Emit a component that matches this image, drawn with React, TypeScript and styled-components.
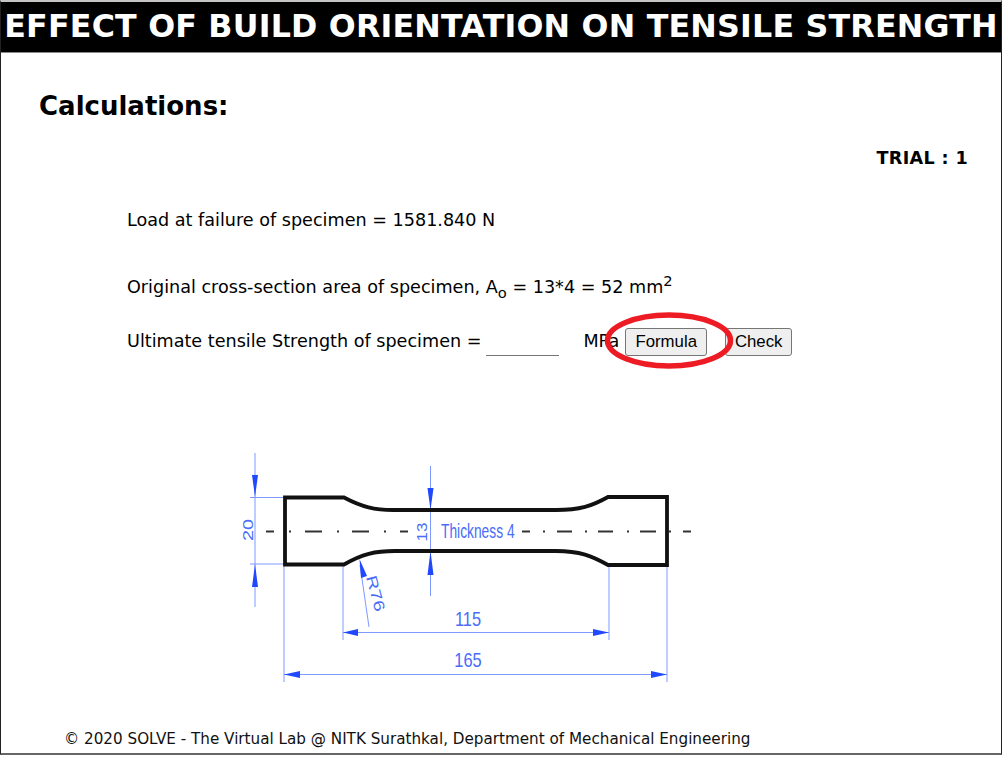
import React from "react";
import styled, { createGlobalStyle } from "styled-components";

const Global = createGlobalStyle`
  html, body { margin: 0; padding: 0; background: #fff; }
  body { font-family: Verdana, "DejaVu Sans", sans-serif; color: #000; }
`;

const Page = styled.div`
  position: relative;
  width: 1003px;
  height: 761px;
  overflow: hidden;
`;

const Frame = styled.main`
  box-sizing: border-box;
  width: 1002px;
  height: 755px;
  border-top: 2px solid #c4c4c4;
  border-left: 1px solid #222;
  border-right: 1px solid #222;
  border-bottom: 2px solid #666;
  display: flex;
  flex-direction: column;
`;

const TitleBar = styled.h1`
  margin: 0;
  height: 51px;
  background: #000;
  color: #fff;
  font-size: 31.7px;
  line-height: 48px;
  font-weight: 700;
  text-align: center;
  white-space: nowrap;
  border-bottom: 1px solid #888;
  box-sizing: border-box;
  letter-spacing: 0.2px;
`;

const Heading = styled.h2`
  margin: 38px 0 0 38px;
  font-size: 26px;
  line-height: 30px;
  font-weight: 700;
`;

const Trial = styled.div`
  margin: 27px 33px 0 0;
  text-align: right;
  font-size: 17.6px;
  line-height: 20px;
  font-weight: 700;
  letter-spacing: 0.35px;
`;

const Lines = styled.section`
  margin: 41px 0 0 126px;
  display: flex;
  flex-direction: column;
  font-size: 17.6px;
`;

const Line = styled.div<{ $top: number }>`
  margin-top: ${(p) => p.$top}px;
  height: 22px;
  line-height: 22px;
  display: flex;
  align-items: center;
  white-space: pre;
  sub, sup { font-size: 14.7px; line-height: 0; }
`;

const Blank = styled.input`
  box-sizing: border-box;
  width: 73px;
  height: 28px;
  margin: 0 24px 0 5px;
  border: 0;
  border-bottom: 1px solid #767676;
  outline: 0;
  background: transparent;
  position: relative;
  top: 1px;
`;

const Action = styled.button<{ $width: number; $gap: number }>`
  box-sizing: border-box;
  width: ${(p) => p.$width}px;
  height: 28px;
  margin-left: ${(p) => p.$gap}px;
  padding: 0;
  flex: none;
  background: #efefef;
  border: 1px solid #767676;
  border-radius: 3px;
  color: #000;
  font: 16.8px "Liberation Sans", Arial, sans-serif;
  position: relative;
  top: 1px;
`;

const Figure = styled.figure`
  margin: 88px 0 0 229px;
  width: 480px;
  height: 250px;
  svg { display: block; }
`;

const Footer = styled.footer`
  margin: 39px 0 0 63px;
  font-size: 15.2px;
  line-height: 20px;
  white-space: nowrap;
  color: #111;
`;

const Callout = styled.svg`
  position: absolute;
  left: 600px;
  top: 308px;
  pointer-events: none;
`;

const BLUE = "#1f48ff";
const LINE = "#7f99ff";

const Dim = styled.text`
  font-family: "Liberation Sans", Arial, sans-serif;
  font-size: 20px;
  fill: #4a6cf7;
`;

const dashes: [number, number][] = [
  [36, 44], [75, 92], [122, 139], [170, 178], [292, 300], [327, 342], [368, 383], [410, 426], [453, 461],
];
const dots = [59, 107, 154, 313, 355, 397, 439];

function Specimen() {
  return (
    <svg width="480" height="250" viewBox="230 440 480 250">
      <g stroke={LINE} strokeWidth="1" fill="none">
        <path d="M255 453V607M250 497.5H284M250 564H284" />
        <path d="M430.5 466V596" />
        <path d="M360 565L369 627" />
        <path d="M343 566V640M609 566V640M343 632.5H609" />
        <path d="M284 566V682M667 566V682M284 674.5H667" />
      </g>
      <g fill={BLUE}>
        <path d="M255 497L252 475H258Z" />
        <path d="M255 564L252 587H258Z" />
        <path d="M430.5 510L427.5 488H433.5Z" />
        <path d="M430.5 551L427.5 575H433.5Z" />
        <path d="M359.5 559L361 578L367 576Z" />
        <path d="M343 632.5L358 629V636Z" />
        <path d="M609 632.5L593 629V636Z" />
        <path d="M284 674.5L300 671V678Z" />
        <path d="M667 674.5L651 671V678Z" />
      </g>
      <g stroke="#111" strokeWidth="3.8" fill="none" strokeLinejoin="miter">
        <path d="M344 497.5H285V564.5H344C362 554 375 551 395 551H556C580 551 592 556 608 565H667V497H608C592 506 580 510 556 510H393C375 510 362 507 344 497.5Z" />
      </g>
      <g stroke="#333" strokeWidth="2" fill="none">
        {dashes.map(([a, b]) => (
          <path key={a} d={`M${a + 230} 531.5H${b + 230}`} />
        ))}
        {dots.map((d) => (
          <path key={d} d={`M${d + 230} 531.5h2`} />
        ))}
      </g>
      <Dim transform="translate(253 530) rotate(-90) scale(1 .77)" textAnchor="middle">20</Dim>
      <Dim transform="translate(427 532) rotate(-90) scale(.85 .72)" textAnchor="middle">13</Dim>
      <Dim transform="translate(441 538) scale(.69 1)">Thickness 4</Dim>
      <Dim transform="translate(366 577) rotate(75) scale(1 .75)">R76</Dim>
      <Dim transform="translate(468 626) scale(.82 1)" textAnchor="middle">115</Dim>
      <Dim transform="translate(468 667) scale(.82 1)" textAnchor="middle">165</Dim>
    </svg>
  );
}

export default function App() {
  return (
    <Page>
      <Global />
      <Frame>
        <TitleBar>EFFECT OF BUILD ORIENTATION ON TENSILE STRENGTH</TitleBar>
        <Heading>Calculations:</Heading>
        <Trial>TRIAL : 1</Trial>
        <Lines>
          <Line $top={0}>Load at failure of specimen = 1581.840 N</Line>
          <Line $top={45}>
            <span>
              Original cross-section area of specimen, A<sub>o</sub> = 13*4 = 52 mm<sup>2</sup>
            </span>
          </Line>
          <Line $top={32}>
            Ultimate tensile Strength of specimen =
            <Blank aria-label="Ultimate tensile strength" />
            MPa
            <Action $width={82} $gap={6}>Formula</Action>
            <Action $width={67} $gap={18}>Check</Action>
          </Line>
        </Lines>
        <Figure>
          <Specimen />
        </Figure>
        <Footer>© 2020 SOLVE - The Virtual Lab @ NITK Surathkal, Department of Mechanical Engineering</Footer>
      </Frame>
      <Callout width="140" height="66" viewBox="600 308 140 66">
        <ellipse cx="669" cy="340.5" rx="61.5" ry="25.5" fill="none" stroke="#ed1c24" strokeWidth="5.5" />
      </Callout>
    </Page>
  );
}
